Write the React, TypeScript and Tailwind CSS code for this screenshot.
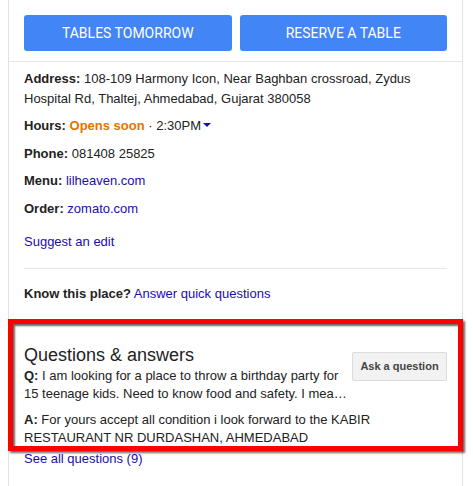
import React from 'react';

const link = 'text-[#1a0dab]';

const Row: React.FC<{ label: string; className?: string; children: React.ReactNode }> = ({
  label,
  className = '',
  children,
}) => (
  <div className={className}>
    <span className="font-bold">{label}</span> {children}
  </div>
);

export default function App() {
  return (
    <div className="relative w-[473px] h-[486px] overflow-hidden bg-white font-['Liberation_Sans',Arial,sans-serif] text-[#222]">
      <div className="ml-2 w-[455px] min-h-[486px] border-x border-[#e2e2e2]">
        {/* Action buttons */}
        <div className="flex gap-2 px-[15px] pt-[15px]">
          {['Tables tomorrow', 'Reserve a table'].map((t) => (
            <button
              key={t}
              className="flex-1 h-9 rounded-[3px] bg-[#4285f4] text-white uppercase text-[14px] font-['Roboto',Arial,sans-serif]"
            >
              {t}
            </button>
          ))}
        </div>
        <div className="mt-[10px] h-px bg-[#e6e6e6]" />

        {/* Place details */}
        <div className="px-[15px] pt-[7px] text-[13px] leading-[19.5px]">
          <Row label="Address:">
            108-109 Harmony Icon, Near Baghban crossroad, Zydus Hospital Rd, Thaltej, Ahmedabad, Gujarat
            380058
          </Row>
          <Row label="Hours:" className="mt-2">
            <span className="font-bold text-[#e37400]">Opens soon</span> · 2:30PM
            <span className="inline-block ml-[2px] mb-[3px] align-middle w-0 h-0 border-x-[4px] border-x-transparent border-t-[4px] border-t-[#1a0dab]" />
          </Row>
          <Row label="Phone:" className="mt-2">
            081408 25825
          </Row>
          <Row label="Menu:" className="mt-2">
            <span className={link}>lilheaven.com</span>
          </Row>
          <Row label="Order:" className="mt-2">
            <span className={link}>zomato.com</span>
          </Row>
          <div className={`mt-[14px] ${link}`}>Suggest an edit</div>
          <div className="mt-4 h-px bg-[#e6e6e6]" />
          <Row label="Know this place?" className="mt-[15px]">
            <span className={link}>Answer quick questions</span>
          </Row>

          {/* Questions & answers */}
          <div className="mt-[40px] flex items-start gap-[5px]">
            <div className="flex-1">
              <div className="text-[18px] leading-6">Questions &amp; answers</div>
              <div className="leading-[18px] line-clamp-2">
                <span className="font-bold">Q:</span> I am looking for a place to throw a birthday party for 15
                teenage kids. Need to know food and safety. I mean is it safe for kids to go there alone
              </div>
            </div>
            <button className="mt-[9px] w-[95px] h-[29px] rounded-[2px] border border-[#dcdcdc] bg-[#f2f2f2] text-[11px] font-bold text-[#444]">
              Ask a question
            </button>
          </div>
          <div className="mt-2 leading-[18px]">
            <span className="font-bold">A:</span> For yours accept all condition i look forward to the KABIR
            RESTAURANT NR DURDASHAN, AHMEDABAD
          </div>
          <div className={`mt-[3px] leading-[18px] ${link}`}>See all questions (9)</div>
        </div>
      </div>

      {/* Red highlight annotation */}
      <div className="pointer-events-none absolute left-2 top-[319px] w-[455px] h-[132px] border-[5px] border-[#ff0000] shadow-[2px_2px_2px_rgba(0,0,0,0.6),inset_2px_2px_2px_rgba(0,0,0,0.6)]" />
    </div>
  );
}
